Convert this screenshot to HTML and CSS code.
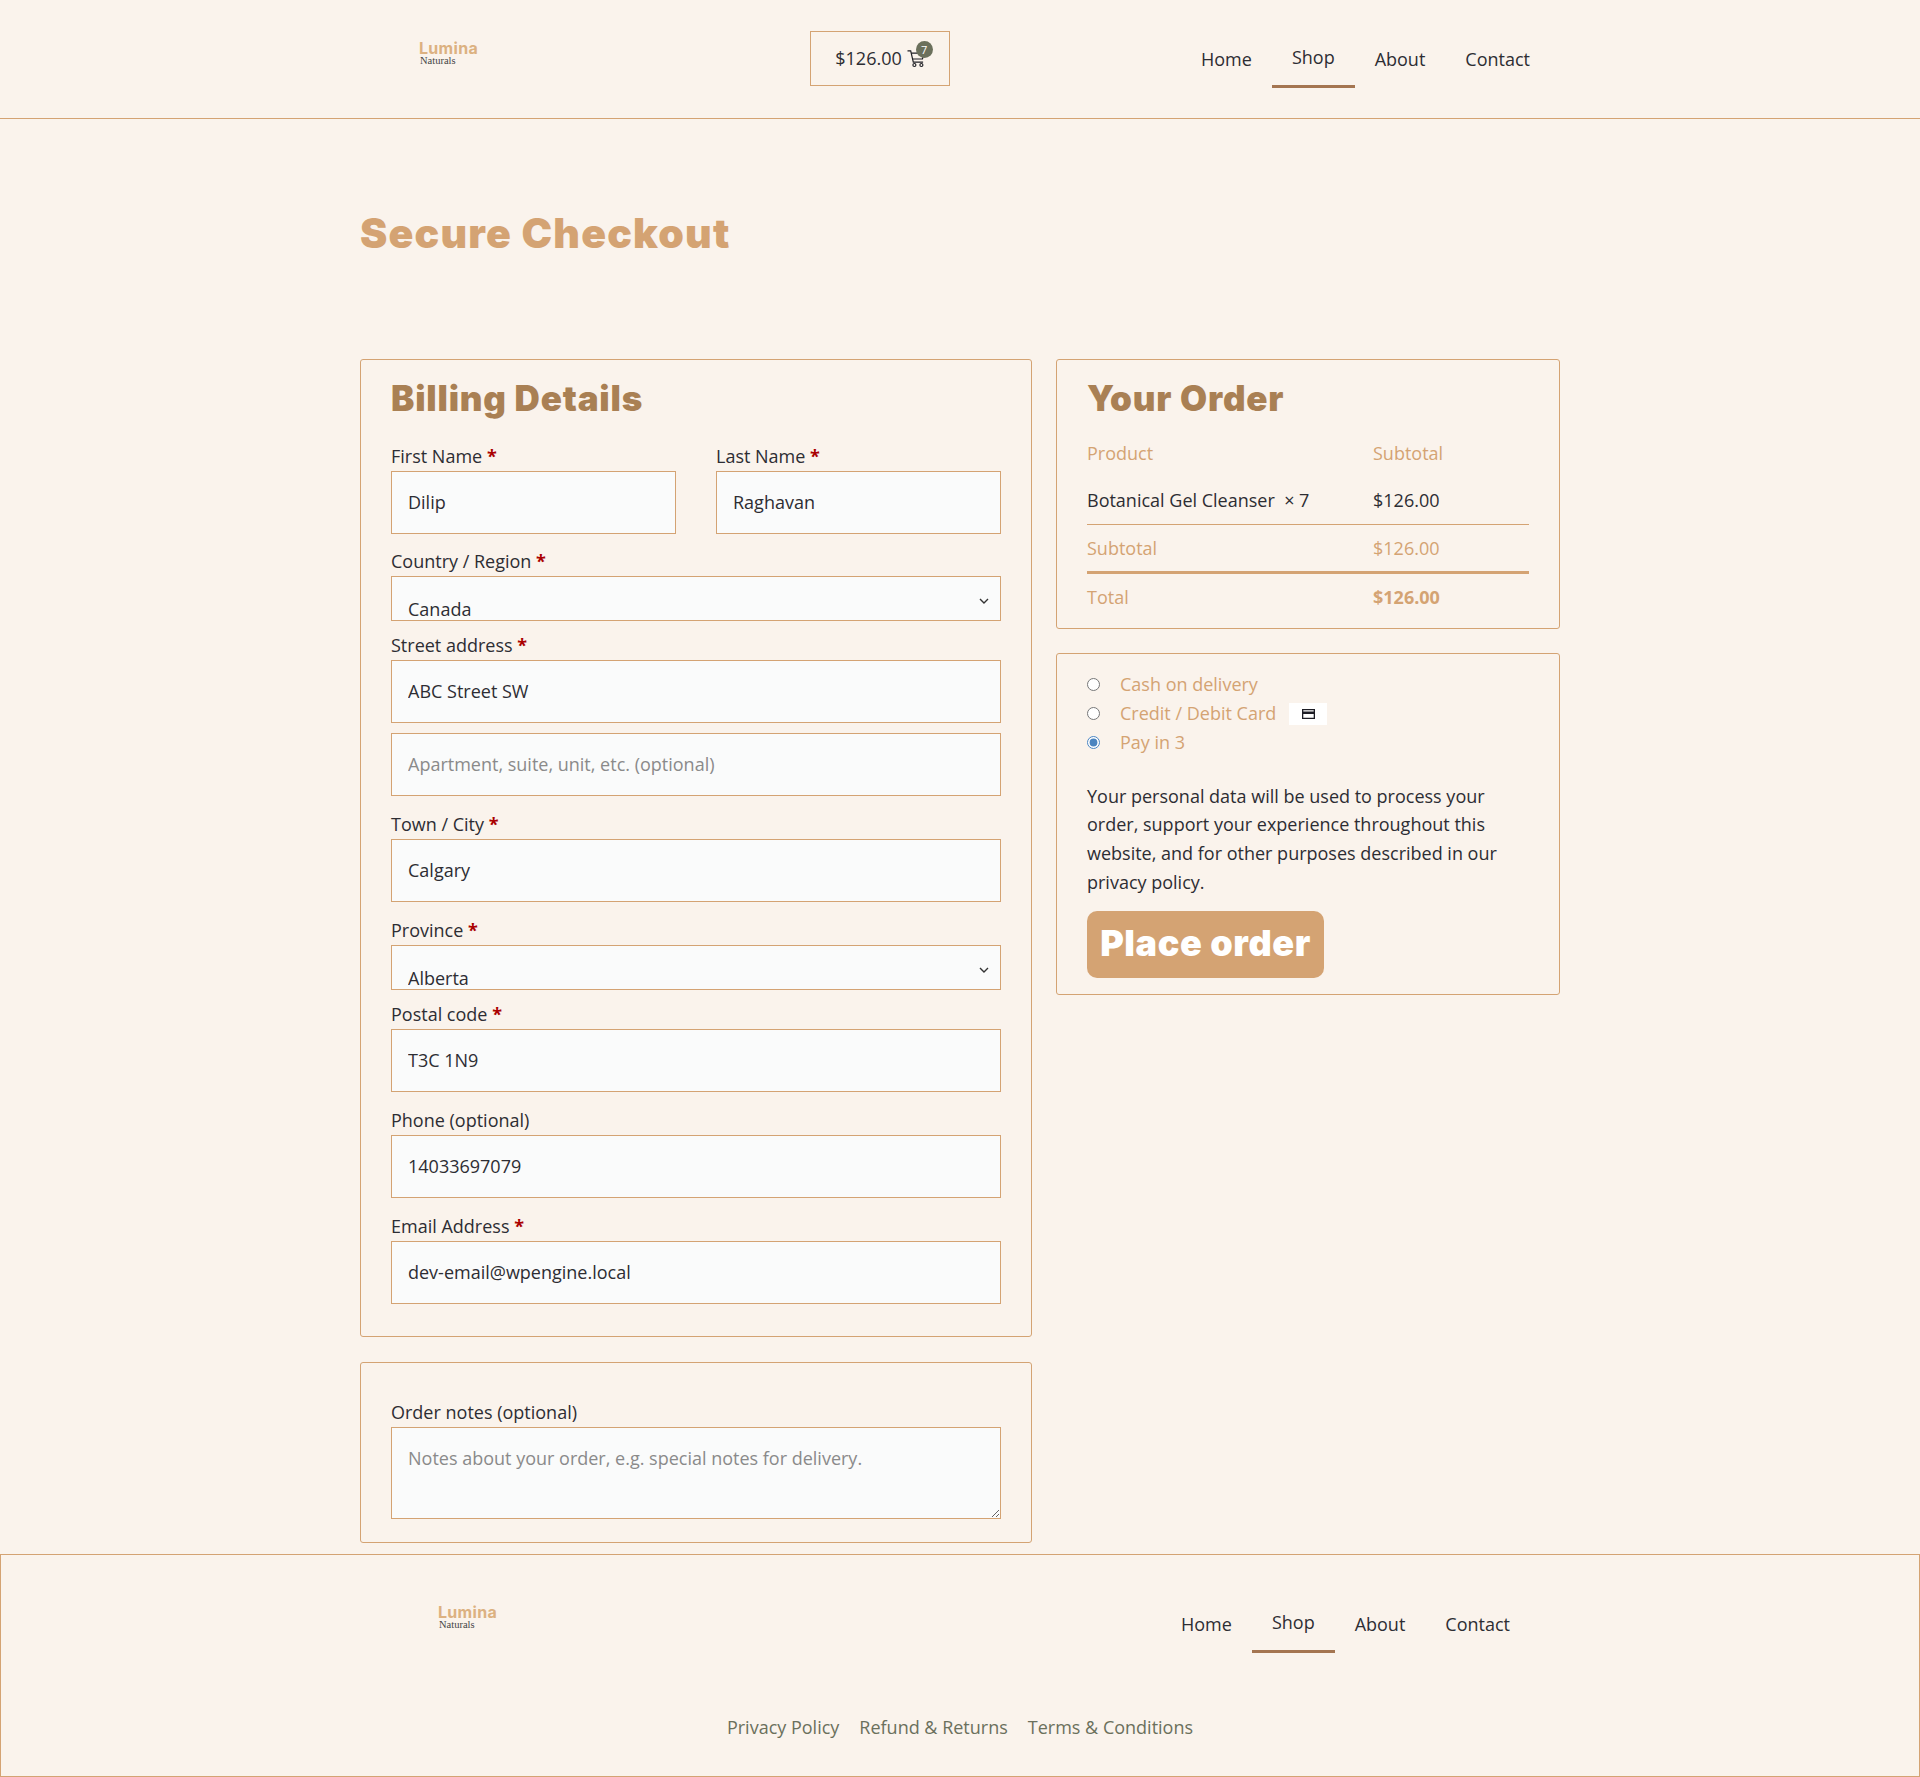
FILE: index.html
```html
<!DOCTYPE html>
<html lang="en">
<head>
<meta charset="UTF-8">
<meta name="viewport" content="width=device-width, initial-scale=1.0">
<title>Secure Checkout</title>
<link rel="stylesheet" href="styles.css">
</head>
<body>

<header class="site-header">
  <div class="header-inner">
    <a class="logo" href="#">
      <span class="logo-name">Lumina</span>
      <span class="logo-sub">Naturals</span>
    </a>
    <a class="cart-box" href="#">
      <span>$126.00</span>
      <span class="cart-icon">
        <svg width="18" height="18" viewBox="0 0 18 18" fill="none" stroke="#1f1f24" stroke-width="1.2">
          <path d="M0.5 0.8h3.2l2.6 11.4h9.8"/>
          <path d="M4.3 3.2H17l-1.5 5.8H5.4"/>
          <circle cx="7.4" cy="15" r="1.5"/>
          <circle cx="14.4" cy="15" r="1.5"/>
        </svg>
        <span class="cart-count">7</span>
      </span>
    </a>
    <nav class="main-nav">
      <a href="#">Home</a>
      <a class="active" href="#">Shop</a>
      <a href="#">About</a>
      <a href="#">Contact</a>
    </nav>
  </div>
</header>

<main class="page">
  <h1 class="page-title">Secure Checkout</h1>

  <div class="checkout">
    <div class="col-left">
      <section class="card billing">
        <h2>Billing Details</h2>

        <div class="field-row">
          <div class="field">
            <label>First Name <abbr>*</abbr></label>
            <input type="text" value="Dilip">
          </div>
          <div class="field">
            <label>Last Name <abbr>*</abbr></label>
            <input type="text" value="Raghavan">
          </div>
        </div>

        <div class="field field-select">
          <label>Country / Region <abbr>*</abbr></label>
          <select><option>Canada</option></select>
        </div>

        <div class="field">
          <label>Street address <abbr>*</abbr></label>
          <input type="text" value="ABC Street SW">
        </div>
        <div class="field">
          <input type="text" placeholder="Apartment, suite, unit, etc. (optional)">
        </div>

        <div class="field">
          <label>Town / City <abbr>*</abbr></label>
          <input type="text" value="Calgary">
        </div>

        <div class="field field-select">
          <label>Province <abbr>*</abbr></label>
          <select><option>Alberta</option></select>
        </div>

        <div class="field">
          <label>Postal code <abbr>*</abbr></label>
          <input type="text" value="T3C 1N9">
        </div>

        <div class="field">
          <label>Phone (optional)</label>
          <input type="text" value="14033697079">
        </div>

        <div class="field">
          <label>Email Address <abbr>*</abbr></label>
          <input type="text" value="dev-email@wpengine.local">
        </div>
      </section>

      <section class="card notes">
        <label>Order notes (optional)</label>
        <textarea placeholder="Notes about your order, e.g. special notes for delivery."></textarea>
      </section>
    </div>

    <div class="col-right">
      <section class="card order">
        <h2>Your Order</h2>
        <table class="order-table">
          <tr class="muted">
            <td class="col-name">Product</td>
            <td>Subtotal</td>
          </tr>
          <tr class="item">
            <td>Botanical Gel Cleanser &nbsp;× 7</td>
            <td>$126.00</td>
          </tr>
          <tr class="muted sub">
            <td>Subtotal</td>
            <td>$126.00</td>
          </tr>
          <tr class="muted total">
            <td>Total</td>
            <td><strong>$126.00</strong></td>
          </tr>
        </table>
      </section>

      <section class="card payment">
        <label class="pay-option"><input type="radio" name="pay"> Cash on delivery</label>
        <label class="pay-option"><input type="radio" name="pay"> Credit / Debit Card
          <span class="card-badge">
            <svg width="13" height="10" viewBox="0 0 13 10">
              <path fill="#1c1c24" d="M0 0h13v10H0z"/>
              <path fill="#fff" d="M1.3 1.2h10.4v1.3H1.3zM1.3 5h10.4v3.8H1.3z"/>
            </svg>
          </span>
        </label>
        <label class="pay-option"><input type="radio" name="pay" checked> Pay in 3</label>
        <p class="privacy">Your personal data will be used to process your order, support your experience throughout this website, and for other purposes described in our privacy policy.</p>
        <button class="place-order">Place order</button>
      </section>
    </div>
  </div>
</main>

<footer class="site-footer">
  <div class="footer-inner">
    <a class="logo" href="#">
      <span class="logo-name">Lumina</span>
      <span class="logo-sub">Naturals</span>
    </a>
    <nav class="main-nav">
      <a href="#">Home</a>
      <a class="active" href="#">Shop</a>
      <a href="#">About</a>
      <a href="#">Contact</a>
    </nav>
  </div>
  <div class="footer-links">
    <a href="#">Privacy Policy</a>
    <a href="#">Refund &amp; Returns</a>
    <a href="#">Terms &amp; Conditions</a>
  </div>
</footer>

</body>
</html>
```

FILE: styles.css
```css
body {
  margin: 0;
  background: #faf3ec;
  color: #2d2d33;
  font-family: "Open Sans", sans-serif;
  font-size: 18px;
  line-height: 27px;
}

a {
  color: inherit;
  text-decoration: none;
}

/* header */
.site-header {
  height: 118px;
  border-bottom: 1px solid #d4a373;
}

.header-inner {
  width: 1200px;
  height: 118px;
  margin: 0 auto;
  display: flex;
  align-items: center;
}

.header-inner .logo {
  width: 391px;
  margin-left: 59px;
  margin-top: -12px;
}

.logo {
  display: block;
}

.logo-name {
  display: block;
  font-family: Inter, sans-serif;
  font-weight: 700;
  font-size: 16px;
  line-height: 16px;
  letter-spacing: 0.3px;
  color: #dcb181;
}

.logo-sub {
  display: block;
  margin-left: 1px;
  font-family: "Liberation Serif", serif;
  font-size: 10.5px;
  line-height: 10px;
  color: #444;
}

.cart-box {
  width: 140px;
  height: 55px;
  box-sizing: border-box;
  border: 1px solid #d4a373;
  padding-left: 2px;
  display: flex;
  align-items: center;
  justify-content: center;
  gap: 5px;
  margin-top: -1px;
}

.cart-icon {
  position: relative;
  display: block;
  width: 20px;
  height: 18px;
}

.cart-icon svg {
  display: block;
}

.cart-count {
  position: absolute;
  top: -9px;
  left: 9px;
  width: 17px;
  height: 17px;
  border-radius: 50%;
  background: #6b705c;
  color: #fff;
  font-size: 11px;
  line-height: 17px;
  text-align: center;
}

.main-nav {
  margin-left: auto;
  margin-right: 10px;
  display: flex;
  align-items: center;
}

.main-nav a {
  padding: 14px 20px;
}

.main-nav a.active {
  border-bottom: 3px solid #a47551;
}

/* page */
.page {
  width: 1200px;
  margin: 0 auto;
}

.page-title {
  margin: 0;
  padding: 81px 0 93px;
  font-family: Inter, sans-serif;
  font-weight: 900;
  font-size: 41px;
  line-height: 66px;
  letter-spacing: 1.2px;
  color: #d4a373;
}

.checkout {
  display: flex;
  gap: 24px;
  align-items: flex-start;
}

.col-left {
  width: 672px;
  display: flex;
  flex-direction: column;
  gap: 25px;
}

.col-right {
  width: 504px;
  display: flex;
  flex-direction: column;
  gap: 24px;
}

.card {
  box-sizing: border-box;
  border: 1px solid #d4a373;
  border-radius: 3px;
}

.card h2 {
  margin: 0;
  font-family: Inter, sans-serif;
  font-weight: 900;
  font-size: 35px;
  line-height: 48px;
  letter-spacing: 0.8px;
  color: #a98054;
}

/* billing form */
.billing {
  padding: 14px 30px 22px;
}

.billing h2 {
  margin-bottom: 16.5px;
}

.field-row {
  display: flex;
  gap: 40px;
}

.field-row .field {
  flex: 1;
  margin-bottom: 9.5px;
}

.field {
  margin-bottom: 10.5px;
}

.field-select {
  margin-bottom: 6px;
}

label {
  display: block;
}

.field label {
  padding-top: 4.5px;
  margin-bottom: 1px;
}

abbr {
  color: #a00;
  font-weight: 700;
}

input[type="text"],
select,
textarea {
  display: block;
  width: 100%;
  box-sizing: border-box;
  border: 1px solid #d4a373;
  border-radius: 0;
  background-color: #fafbfb;
  color: #2d2d33;
  font-family: "Open Sans", sans-serif;
  font-size: 18px;
  outline: none;
}

input[type="text"] {
  height: 63px;
  padding: 0 16px 1px;
}

select {
  height: 45px;
  padding: 20px 16px 0;
  appearance: none;
  background-image: url("data:image/svg+xml,%3Csvg xmlns='http://www.w3.org/2000/svg' width='10' height='6'%3E%3Cpath d='M1 1l4 4 4-4' fill='none' stroke='%23333' stroke-width='1.4'/%3E%3C/svg%3E");
  background-repeat: no-repeat;
  background-position: right 11px top 21px;
}

::placeholder {
  color: #8a8a8a;
  opacity: 1;
}

/* order notes */
.notes {
  padding: 36px 30px 23px;
}

.notes label {
  margin-bottom: 1px;
}

.notes textarea {
  height: 92px;
  padding: 17px 16px;
  line-height: 27px;
}

/* order table */
.order {
  padding: 14px 30px 6px;
}

.order h2 {
  margin-bottom: 8px;
}

.order-table {
  width: 100%;
  border-collapse: collapse;
}

.order-table td {
  padding: 10px 0;
}

.order-table .col-name {
  width: 286px;
}

.muted {
  color: #d4a373;
}

.item td {
  border-bottom: 1px solid #d4a373;
}

.order-table .sub td {
  padding-bottom: 9px;
  border-bottom: 3px solid #d4a373;
}

.order-table .total td {
  padding-top: 10px;
  padding-bottom: 11px;
}

/* payment */
.payment {
  padding: 16px 30px 16px;
}

.pay-option {
  line-height: 29px;
  color: #d4a373;
  display: flex;
  align-items: center;
}

.pay-option input {
  width: 13px;
  height: 13px;
  margin: 0 20px 0 0;
  accent-color: #4a84c0;
}

.card-badge {
  width: 38px;
  height: 22px;
  margin-left: 13px;
  background: #fff;
  display: flex;
  align-items: center;
  justify-content: center;
}

.privacy {
  margin: 24.5px 0 14.5px;
  line-height: 28.8px;
}

.place-order {
  display: block;
  width: 237px;
  height: 67px;
  padding: 0 0 3px;
  border: none;
  border-radius: 10px;
  background: #d4a373;
  color: #fff;
  font-family: Inter, sans-serif;
  font-weight: 900;
  font-size: 36px;
  letter-spacing: 0.6px;
  cursor: pointer;
}

/* footer */
.site-footer {
  margin-top: 11px;
  height: 223px;
  box-sizing: border-box;
  border: 1px solid #d4a373;
}

.footer-inner {
  width: 1200px;
  margin: 0 auto;
  padding-top: 40px;
  display: flex;
  align-items: center;
}

.footer-inner .logo {
  margin-left: 78px;
  margin-top: -14px;
}

.footer-inner .main-nav {
  margin-right: 30px;
}

.footer-links {
  margin-top: 61px;
  display: flex;
  justify-content: center;
  gap: 20px;
  color: #6b705c;
}
```
